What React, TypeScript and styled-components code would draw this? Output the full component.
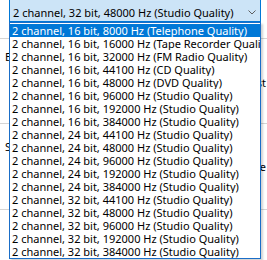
import React from 'react';
import styled, { createGlobalStyle } from 'styled-components';

const formats = [
  '2 channel, 16 bit, 8000 Hz (Telephone Quality)',
  '2 channel, 16 bit, 16000 Hz (Tape Recorder Quality)',
  '2 channel, 16 bit, 32000 Hz (FM Radio Quality)',
  '2 channel, 16 bit, 44100 Hz (CD Quality)',
  '2 channel, 16 bit, 48000 Hz (DVD Quality)',
  '2 channel, 16 bit, 96000 Hz (Studio Quality)',
  '2 channel, 16 bit, 192000 Hz (Studio Quality)',
  '2 channel, 16 bit, 384000 Hz (Studio Quality)',
  '2 channel, 24 bit, 44100 Hz (Studio Quality)',
  '2 channel, 24 bit, 48000 Hz (Studio Quality)',
  '2 channel, 24 bit, 96000 Hz (Studio Quality)',
  '2 channel, 24 bit, 192000 Hz (Studio Quality)',
  '2 channel, 24 bit, 384000 Hz (Studio Quality)',
  '2 channel, 32 bit, 44100 Hz (Studio Quality)',
  '2 channel, 32 bit, 48000 Hz (Studio Quality)',
  '2 channel, 32 bit, 96000 Hz (Studio Quality)',
  '2 channel, 32 bit, 192000 Hz (Studio Quality)',
  '2 channel, 32 bit, 384000 Hz (Studio Quality)',
];

const GlobalStyle = createGlobalStyle`
  html, body {
    margin: 0;
    background: #fff;
    overflow: hidden;
  }
  body {
    font-family: "Noto Sans", "Open Sans", sans-serif;
    font-size: 11px;
    color: #000;
  }
`;

const App = () => {
  const selected = '2 channel, 32 bit, 48000 Hz (Studio Quality)';
  const hovered = 0;

  return (
    <>
      <GlobalStyle />
      <Page>
        <Backdrop>
          <Combo>
            <ComboText>{selected}</ComboText>
            <Chevron width="8" height="5" viewBox="0 0 8 5">
              <polyline points="0.5,0.5 4,4 7.5,0.5" fill="none" stroke="#5f5f5f" strokeWidth="1" />
            </Chevron>
          </Combo>
          <Rule $gap={16} />
          <GroupLabel $gap={11}>Exclusive</GroupLabel>
          <OptionText $gap={12}>Test</OptionText>
          <Rule $gap={33} />
          <GroupLabel $gap={16}>Signal</GroupLabel>
          <OptionText $gap={6}>Restore</OptionText>
          <Rule $gap={35} />
        </Backdrop>

        <DropList>
          {formats.map((f, i) => (
            <ListItem key={f} $active={i === hovered}>{f}</ListItem>
          ))}
        </DropList>
      </Page>
    </>
  );
};

const Page = styled.div`
  position: relative;
  width: 267px;
  height: 260px;
  overflow: hidden;
  background: #fff;
`;

const Backdrop = styled.div`
  display: flex;
  flex-direction: column;
`;

const Combo = styled.div`
  box-sizing: border-box;
  display: flex;
  align-items: center;
  height: 25px;
  margin: -3px 6px 0 9px;
  padding: 6px 4px 0 3px;
  background: #cce4f7;
  border: 1px solid #0078d7;
`;

const ComboText = styled.span`
  flex: 1;
  white-space: nowrap;
  line-height: 14px;
`;

const Chevron = styled.svg`
  display: block;
  flex: none;
`;

const Rule = styled.div<{ $gap: number }>`
  height: 1px;
  margin-top: ${p => p.$gap}px;
  background: #d5d5d5;
`;

const GroupLabel = styled.div<{ $gap: number }>`
  margin-top: ${p => p.$gap}px;
  padding-left: 5px;
  line-height: 14px;
  white-space: nowrap;
`;

const OptionText = styled.div<{ $gap: number }>`
  margin-top: ${p => p.$gap}px;
  padding-right: 1px;
  line-height: 14px;
  text-align: right;
  white-space: nowrap;
`;

const DropList = styled.div`
  position: absolute;
  left: 9px;
  top: 22px;
  width: 252px;
  box-sizing: border-box;
  padding-top: 1px;
  background: #fff;
  border: 1px solid #1a6ec8;
  box-shadow: 2px 2px 2px rgba(0, 0, 0, 0.18);
  overflow: hidden;
`;

const ListItem = styled.div<{ $active: boolean }>`
  height: 13px;
  line-height: 13px;
  padding-left: 2px;
  white-space: nowrap;
  overflow: hidden;
  background: ${p => (p.$active ? '#0078d7' : '#fff')};
  color: ${p => (p.$active ? '#fff' : '#000')};
`;

export default App;
